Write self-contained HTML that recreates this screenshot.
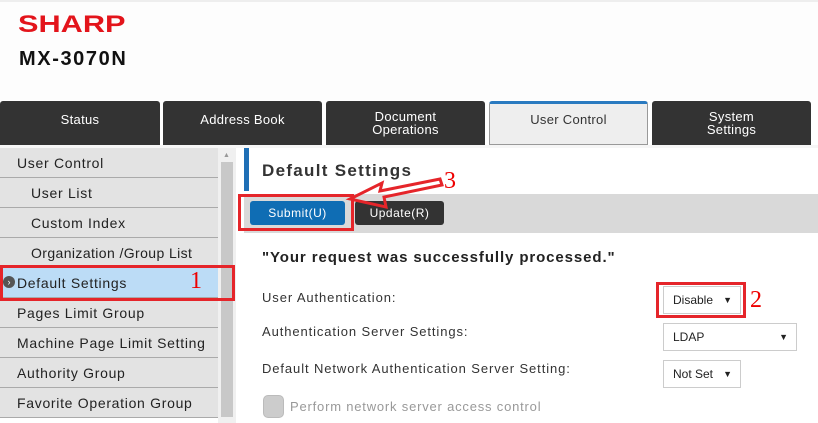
<!DOCTYPE html>
<html><head><style>
*{margin:0;padding:0;box-sizing:border-box}
body{width:818px;height:423px;overflow:hidden;background:#fff;font-family:"Liberation Sans","DejaVu Sans",sans-serif;position:relative}
.a{position:absolute}
.tab{position:absolute;top:101px;height:44px;background:#333;color:#fff;font-size:13px;text-align:center;border-radius:3px 3px 0 0;line-height:13px;display:flex;align-items:center;justify-content:center;letter-spacing:0.3px}
.it{position:absolute;left:0;width:218px;height:30px;background:#e3e3e3;border-bottom:1px solid #aaa;font-size:14px;color:#222;line-height:30px;padding-left:17px;letter-spacing:0.7px;white-space:nowrap}
.lab{position:absolute;left:262px;font-size:13px;color:#333;letter-spacing:0.9px}
.sel{position:absolute;background:#fff;border:1px solid #ccc;font-size:12px;color:#222;padding-left:9px;line-height:26px}
.sel span{position:absolute;right:8px;font-size:9px}
.rb{position:absolute;border:3px solid #e5252a}
.rn{position:absolute;color:#e00;font-family:"Liberation Serif",serif;font-size:24px}
</style></head><body>
<div class="a" style="left:0;top:0;width:818px;height:100px;background:#fdfdfd;border-top:2px solid #eee"></div>
<div class="a" style="left:18px;top:11px;color:#e3141b;font-weight:bold;font-size:24px;transform:scaleX(1.28);transform-origin:left">SHARP</div>
<div class="a" style="left:19px;top:48px;color:#111;font-weight:bold;font-size:20px;letter-spacing:1.6px">MX-3070N</div>
<div class="tab" style="left:0;width:160px;padding-bottom:8px">Status</div>
<div class="tab" style="left:163px;width:159px;padding-bottom:8px">Address Book</div>
<div class="tab" style="left:326px;width:159px">Document<br>Operations</div>
<div class="tab" style="left:489px;width:159px;background:#eee;color:#333;border:1px solid #999;border-top:3px solid #2a7ac0;align-items:flex-start;padding-top:9px">User Control</div>
<div class="tab" style="left:652px;width:159px">System<br>Settings</div>
<div class="a" style="left:0;top:145px;width:818px;height:3px;background:#f6f6f6"></div>
<div class="it" style="top:148px;padding-left:17px">User Control</div>
<div class="it" style="top:178px;padding-left:31px">User List</div>
<div class="it" style="top:208px;padding-left:31px">Custom Index</div>
<div class="it" style="top:238px;padding-left:31px;letter-spacing:0.4px">Organization /Group List</div>
<div class="it" style="top:268px;background:#bcdcf6;padding-left:17px">Default Settings</div>
<div class="a" style="left:3px;top:276px;width:12px;height:12px;border-radius:50%;background:#555;color:#fff;font-size:9px;line-height:12px;text-align:center">›</div>
<div class="it" style="top:298px">Pages Limit Group</div>
<div class="it" style="top:328px">Machine Page Limit Setting</div>
<div class="it" style="top:358px">Authority Group</div>
<div class="it" style="top:388px">Favorite Operation Group</div>
<div class="a" style="left:218px;top:148px;width:18px;height:275px;background:#f0f0f0"></div>
<div class="a" style="left:221px;top:162px;width:12px;height:255px;background:#c8c8c8"></div>
<div class="a" style="left:223px;top:152px;font-size:7px;color:#999">▲</div>
<div class="rb" style="left:0;top:265px;width:235px;height:36px"></div>
<div class="rn" style="left:190px;top:268px">1</div>
<div class="a" style="left:244px;top:148px;width:5px;height:43px;background:#1f6fb5"></div>
<div class="a" style="left:262px;top:161px;font-size:17px;font-weight:bold;color:#333;letter-spacing:1.3px">Default Settings</div>
<div class="a" style="left:244px;top:194px;width:574px;height:39px;background:#d9d9d9"></div>
<div class="a" style="left:250px;top:201px;width:95px;height:24px;background:#0f6db4;border-radius:3px;color:#fff;font-size:12px;text-align:center;line-height:24px;letter-spacing:0.5px">Submit(U)</div>
<div class="a" style="left:355px;top:201px;width:89px;height:24px;background:#333;border-radius:3px;color:#fff;font-size:12px;text-align:center;line-height:24px;letter-spacing:0.5px">Update(R)</div>
<div class="rb" style="left:238px;top:194px;width:116px;height:37px"></div>
<svg class="a" style="left:340px;top:175px" width="110" height="40"><polygon points="10,24 42,8 40,16 100,4 102,10 44,22 46,32" fill="none" stroke="#e5252a" stroke-width="3"/></svg>
<div class="rn" style="left:444px;top:168px">3</div>
<div class="a" style="left:262px;top:249px;font-size:15px;font-weight:bold;color:#222;letter-spacing:0.9px">"Your request was successfully processed."</div>
<div class="lab" style="top:290px">User Authentication:</div>
<div class="lab" style="top:324px">Authentication Server Settings:</div>
<div class="lab" style="top:361px">Default Network Authentication Server Setting:</div>
<div class="sel" style="left:663px;top:286px;width:78px;height:28px">Disable<span>▼</span></div>
<div class="rb" style="left:656px;top:282px;width:90px;height:36px"></div>
<div class="rn" style="left:750px;top:287px">2</div>
<div class="sel" style="left:663px;top:323px;width:134px;height:28px">LDAP<span>▼</span></div>
<div class="sel" style="left:663px;top:360px;width:78px;height:28px">Not Set<span>▼</span></div>
<div class="a" style="left:263px;top:395px;width:21px;height:23px;border-radius:5px;background:#ccc;border:1px solid #bbb"></div>
<div class="a" style="left:290px;top:399px;font-size:13px;color:#999;letter-spacing:0.8px">Perform network server access control</div>
</body></html>
